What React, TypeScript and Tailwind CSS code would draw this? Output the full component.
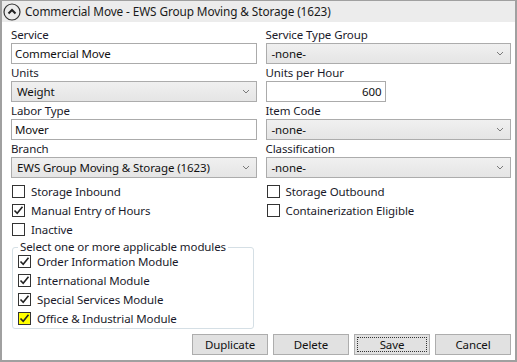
import React from 'react';

const FONT = { fontFamily: '"Noto Sans", "Open Sans", sans-serif', letterSpacing: '-0.1px' };

function Chevron() {
  return (
    <svg width="8" height="5" viewBox="0 0 8 5" className="shrink-0">
      <path d="M1 1 L4 4 L7 1" fill="none" stroke="#7a7a7a" strokeWidth="1" />
    </svg>
  );
}

function Label({ children }: { children: React.ReactNode }) {
  return <div className="h-[17px] leading-[17px] text-[11.5px] text-[#1a1a2a]">{children}</div>;
}

function TextBox({ value, right, className = '' }: { value: string; right?: boolean; className?: string }) {
  return (
    <div
      className={`h-[21px] border border-[#ababab] bg-white px-[3px] text-[11.5px] leading-[19px] text-[#111] ${right ? 'text-right' : ''} ${className}`}
    >
      {value}
    </div>
  );
}

function Select({ value }: { value: string }) {
  return (
    <div className="flex h-[21px] items-center justify-between border border-[#acacac] bg-gradient-to-b from-[#f0f0f0] to-[#e5e5e5] pl-[5px] pr-[6px] text-[11.5px] text-[#111]">
      <span>{value}</span>
      <Chevron />
    </div>
  );
}

function Check({ label, checked, yellow }: { label: string; checked?: boolean; yellow?: boolean }) {
  return (
    <div className="flex h-[19px] items-center gap-[6px] text-[11.5px] text-[#1a1a2a]">
      <div
        className={`flex h-[13px] w-[13px] shrink-0 items-center justify-center border border-[#333] ${yellow ? 'bg-[#ffff00]' : 'bg-white'}`}
      >
        {checked && (
          <svg width="11" height="11" viewBox="0 0 11 11">
            <path d="M1.5 5.5 L4.2 8.3 L9.5 1.8" fill="none" stroke="#222" strokeWidth="1.6" />
          </svg>
        )}
      </div>
      <span>{label}</span>
    </div>
  );
}

function Button({ children, focused }: { children: React.ReactNode; focused?: boolean }) {
  return (
    <div className="flex h-[21px] w-[76px] items-center justify-center border border-[#adadad] bg-[#e1e1e1] p-[2px] text-[11.5px] text-[#111]">
      <div
        className={`flex h-full w-full items-center justify-center ${focused ? 'border border-dotted border-[#333]' : ''}`}
      >
        {children}
      </div>
    </div>
  );
}

export default function App() {
  return (
    <div className="h-[362px] w-[517px] overflow-hidden bg-white" style={FONT}>
      <div className="flex h-full flex-col border-x-2 border-b-2 border-t border-[#a0a0a0]">
        {/* Header */}
        <div className="flex h-[21px] shrink-0 items-center gap-[4px] bg-[#ececec] pl-[1px]">
          <svg width="18" height="18" viewBox="0 0 18 18">
            <circle cx="9" cy="9" r="8" fill="none" stroke="#333" strokeWidth="1.2" />
            <path d="M5.5 10.5 L9 7 L12.5 10.5" fill="none" stroke="#222" strokeWidth="2" />
          </svg>
          <span className="text-[11.8px] text-[#1a1a1a]">Commercial Move - EWS Group Moving &amp; Storage (1623)</span>
        </div>

        {/* Body */}
        <div className="flex flex-col pl-[9px] pr-[4px] pt-[4px]">
          <div className="grid grid-cols-2 gap-x-[9px]">
            <div className="flex flex-col">
              <Label>Service</Label>
              <TextBox value="Commercial Move" />
              <Label>Units</Label>
              <Select value="Weight" />
              <Label>Labor Type</Label>
              <TextBox value="Mover" />
              <Label>Branch</Label>
              <Select value="EWS Group Moving & Storage (1623)" />
              <div className="mt-[4px] pl-[1px]">
                <Check label="Storage Inbound" />
                <Check label="Manual Entry of Hours" checked />
                <Check label="Inactive" />
              </div>
            </div>
            <div className="flex flex-col">
              <Label>Service Type Group</Label>
              <Select value="-none-" />
              <Label>Units per Hour</Label>
              <TextBox value="600" right className="w-[120px]" />
              <Label>Item Code</Label>
              <Select value="-none-" />
              <Label>Classification</Label>
              <Select value="-none-" />
              <div className="mt-[4px] pl-[1px]">
                <Check label="Storage Outbound" />
                <Check label="Containerization Eligible" />
              </div>
            </div>
          </div>

          {/* Modules group */}
          <fieldset className="ml-[1px] mt-[1px] h-[89px] w-[242px] rounded-[3px] border border-[#d5dfe5] px-[5px] pb-[4px]">
            <legend className="px-[2px] text-[11.5px] leading-[14px] text-[#1a1a2a]">
              Select one or more applicable modules
            </legend>
            <div className="-mt-[2px]">
              <Check label="Order Information Module" checked />
              <Check label="International Module" checked />
              <Check label="Special Services Module" checked />
              <Check label="Office & Industrial Module" checked yellow />
            </div>
          </fieldset>

          {/* Buttons */}
          <div className="mt-[5px] flex justify-end gap-[5px]">
            <Button>Duplicate</Button>
            <Button>Delete</Button>
            <Button focused>Save</Button>
            <Button>Cancel</Button>
          </div>
        </div>
      </div>
    </div>
  );
}
